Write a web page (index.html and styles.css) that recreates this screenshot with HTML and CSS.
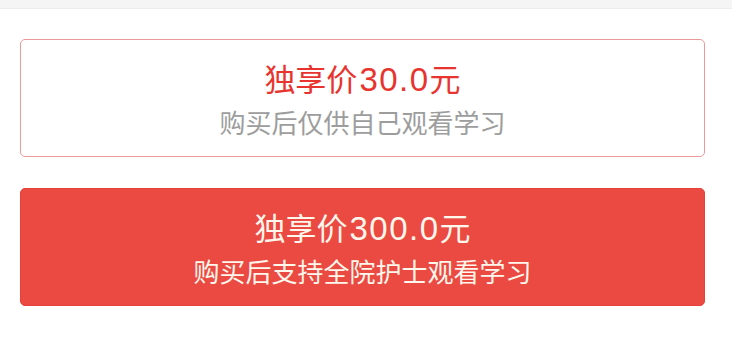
FILE: index.html
```html
<!DOCTYPE html>
<html lang="zh-CN">
<head>
<meta charset="utf-8">
<link rel="stylesheet" href="styles.css">
</head>
<body>
<div class="topbar"></div>
<div class="options">
  <div class="option option-outline">
    <div class="option-title">独享价<span class="num">30.0</span>元</div>
    <div class="option-sub">购买后仅供自己观看学习</div>
  </div>
  <div class="option option-filled">
    <div class="option-title">独享价<span class="num">300.0</span>元</div>
    <div class="option-sub">购买后支持全院护士观看学习</div>
  </div>
</div>
</body>
</html>
```

FILE: styles.css
```css
html, body {
  margin: 0;
  padding: 0;
  background: #ffffff;
  font-family: "Noto Sans CJK SC", "Noto Sans", sans-serif;
}
.topbar {
  height: 8px;
  background: #f5f5f5;
  border-bottom: 1px solid #ededed;
}
.options {
  display: flex;
  flex-direction: column;
  gap: 31px;
  padding: 30px 27px 0 20px;
}
.option {
  box-sizing: border-box;
  height: 118px;
  border-radius: 5px;
  display: flex;
  flex-direction: column;
  align-items: center;
  justify-content: flex-start;
  padding-top: 16px;
}
.option-outline {
  border: 1px solid #eb9a9a;
  background: #fff;
}
.option-filled {
  border: 1px solid #e5403a;
  background: #ea4a42;
}
.option-title {
  font-size: 31px;
  line-height: 44px;
  height: 44px;
  white-space: nowrap;
}
.num {
  font-family: "Liberation Sans", "Noto Sans", sans-serif;
  font-size: 33px;
  letter-spacing: 1.5px;
  margin-left: 2px;
}
.option-sub {
  font-size: 26px;
  line-height: 44px;
  height: 44px;
  white-space: nowrap;
}
.option-outline .option-title { color: #e8342e; }
.option-outline .option-sub { color: #9d9d9d; }
.option-filled .option-title,
.option-filled .option-sub { color: #fff6ec; }
```
